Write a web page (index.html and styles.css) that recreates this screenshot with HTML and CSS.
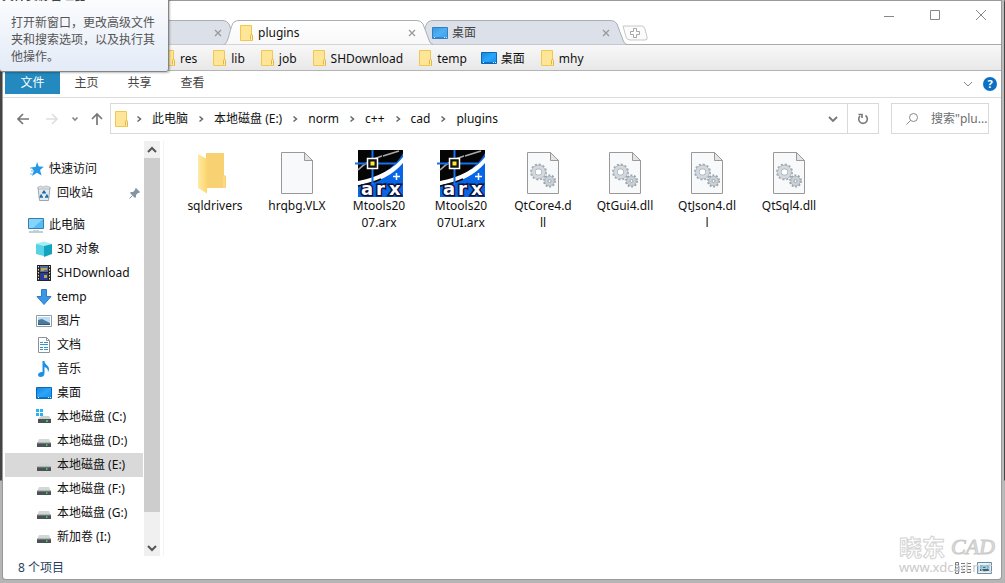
FILE: index.html
```html
<!DOCTYPE html>
<html lang="zh-CN">
<head>
<meta charset="utf-8">
<title>plugins</title>
<link rel="stylesheet" href="styles.css">
</head>
<body>
<svg class="defs" aria-hidden="true">
  <defs>
    <linearGradient id="fold" x2="1" y2="0"><stop offset="0" stop-color="#ffe9a8"/><stop offset="1" stop-color="#fbd76c"/></linearGradient>
    <linearGradient id="sky" x2="1" y2="1"><stop offset="0" stop-color="#1683e0"/><stop offset=".5" stop-color="#2aa5f8"/><stop offset="1" stop-color="#1590ee"/></linearGradient>
    <linearGradient id="tabOn" x2="0" y2="1"><stop offset="0" stop-color="#ffffff"/><stop offset="1" stop-color="#f8f8f8"/></linearGradient>
  </defs>
  <symbol id="folder" viewBox="0 0 16 16"><path d="M2.500.5h11v9l1 1v5h-12z" fill="#ffe597" stroke="#eec84f"/><path d="M12.500 14.500v-4l1-1.500 1 1.500v5" fill="#ffeeb5" stroke="#e3b640"/></symbol>
  <symbol id="desktop" viewBox="0 0 16 16"><path d="M.5 2.500h15v11H.5z" fill="url(#sky)" stroke="#0a68b8"/><path d="M1 12.500h14" stroke="#1271c0"/><path d="M2 12.500h1m9 0h1m1 0h1" stroke="#d8efff"/></symbol>
  <symbol id="drive" viewBox="0 0 16 16"><path d="M3 6h10l2 4H1z" fill="#d3d7d7"/><path d="M1 10h14v4H1z" fill="#4b5352"/><path d="M1 10h14" stroke="#8c9392"/><path d="M10 12h1.500" stroke="#43e26c" stroke-width="1.500"/></symbol>
  <symbol id="chev" viewBox="0 0 8 8"><path d="M2.500 1.500 5.500 4l-3 2.500" fill="none" stroke="#666" stroke-width="1.500"/></symbol>
  <symbol id="close" viewBox="0 0 8 8"><path d="m1 1 6 6m0-6L1 7" stroke="#999" stroke-width="1.300"/></symbol>
  <symbol id="tab" viewBox="0 0 210 25"><path d="M.5 25C6 24 7 5 11 2Q13 .5 16 .5H194Q198 .5 200 4L206 20Q207 24 210 24.500V25z"/></symbol>
  <symbol id="page" viewBox="0 0 48 48"><path d="M8.500 2.500h23l8 8v33h-31z" fill="#f8f9fa" stroke="#999"/><path d="M31.500 2.500v8h8z" fill="#e4e4e4" stroke="#999"/></symbol>
  <symbol id="dll" viewBox="0 0 48 48">
    <use href="#page"/>
    <circle cx="19.500" cy="22" r="7.600" fill="none" stroke="#a4adb5" stroke-width="1.800" stroke-dasharray="2.200 1.780"/>
    <circle cx="19.500" cy="22" r="5" fill="#fff" stroke="#a4adb5" stroke-width="4.400"/><circle cx="19.500" cy="22" r="5" fill="none" stroke="#d3d9de" stroke-width="3.200"/>
    <circle cx="30.500" cy="31" r="5.600" fill="none" stroke="#98a2ab" stroke-width="1.800" stroke-dasharray="1.900 1.618"/>
    <circle cx="30.500" cy="31" r="4.800" fill="#c9d0d6" stroke="#a4adb5" stroke-width=".8"/><circle cx="30.500" cy="31" r="1.500" fill="#f5f6f7" stroke="#929da7" stroke-width=".8"/>
  </symbol>
  <symbol id="arx" viewBox="0 0 48 48">
    <path d="M3 0h45v47H3z" fill="#0865e6"/><path d="M3 0h45v3C40 18 22 29 3 34z" fill="#050505"/>
    <path d="M3 20C12 11 20 8 27 6M28 6 44 1" fill="none" stroke="#aaa" stroke-width="1.700"/>
    <path d="M3 31C22 28 40 18 48 7v6C38 25 24 32 3 36z" fill="#fff"/><path d="M3 36Q17 33 26 29" fill="none" stroke="#080808" stroke-width="1.500"/>
    <path d="M0 13.500h13m9 0h19M17.500 0v9m0 9v16" stroke="#1673ee" stroke-width="2"/>
    <path d="M12.500 8.500h10v10h-10z" fill="#111" stroke="#fff" stroke-width="1.500"/><path d="M15.500 11.500h4v4h-4z" fill="#ffea32"/>
    <path d="M38 26.500h7m-3.500-3.500v7" stroke="#fff" stroke-width="1.500"/>
    <text x="6 21 34" y="45" class="arx-word">arx</text>
  </symbol>
</svg>

<main class="window">
  <header class="titlebar">
    <nav class="tabs" aria-label="标签页">
      <div class="tab"><svg class="tab-shape"><use href="#tab"/></svg><svg class="i16"><use href="#folder"/></svg><span class="tab-name"></span><button class="tab-close" aria-label="关闭"><svg><use href="#close"/></svg></button></div>
      <div class="tab active"><svg class="tab-shape"><use href="#tab"/></svg><svg class="i16"><use href="#folder"/></svg><span class="tab-name">plugins</span><button class="tab-close" aria-label="关闭"><svg><use href="#close"/></svg></button></div>
      <div class="tab"><svg class="tab-shape"><use href="#tab"/></svg><svg class="i16"><use href="#desktop"/></svg><span class="tab-name">桌面</span><button class="tab-close" aria-label="关闭"><svg><use href="#close"/></svg></button></div>
      <button class="tab-new" aria-label="新标签页"><svg viewBox="0 0 26 16"><path d="M1 1h19q2 0 3 3l2 8q1 3-2 3H8q-3 0-4-3z" fill="#fbfbfb" stroke="#c8c8c8"/><path d="M11.500 3.500h3v3h3v3h-3v3h-3v-3h-3v-3h3z" fill="#fff" stroke="#a5a5a5"/></svg></button>
    </nav>
    <div class="controls">
      <button aria-label="最小化"><svg viewBox="0 0 12 12"><path d="M1 7.500h10"/></svg></button>
      <button aria-label="最大化"><svg viewBox="0 0 12 12"><path d="M1.500 1.500h9v9h-9z"/></svg></button>
      <button aria-label="关闭窗口"><svg viewBox="0 0 12 12"><path d="m1 1 10 10m0-10L1 11"/></svg></button>
    </div>
  </header>

  <nav class="bookmarks" aria-label="书签">
    <a href="#"><svg class="i16"><use href="#folder"/></svg>res</a>
    <a href="#"><svg class="i16"><use href="#folder"/></svg>lib</a>
    <a href="#"><svg class="i16"><use href="#folder"/></svg>job</a>
    <a href="#"><svg class="i16"><use href="#folder"/></svg>SHDownload</a>
    <a href="#"><svg class="i16"><use href="#folder"/></svg>temp</a>
    <a href="#"><svg class="i16"><use href="#desktop"/></svg>桌面</a>
    <a href="#"><svg class="i16"><use href="#folder"/></svg>mhy</a>
  </nav>

  <div class="ribbon">
    <button class="file">文件</button><button>主页</button><button>共享</button><button>查看</button>
    <span class="ribbon-end">
      <button aria-label="展开功能区"><svg width="10" height="8" viewBox="0 0 10 8"><path d="m1 2 4 4 4-4" fill="none" stroke="#888"/></svg></button>
      <button class="help" aria-label="帮助">?</button>
    </span>
  </div>

  <div class="address-row">
    <div class="history">
      <button aria-label="后退"><svg viewBox="0 0 14 14"><path d="M13 7H2m5-5L2 7l5 5" stroke="#777"/></svg></button>
      <button aria-label="前进"><svg viewBox="0 0 14 14"><path d="M1 7h11M7 2l5 5-5 5" stroke="#dedede"/></svg></button>
      <button class="recent" aria-label="最近"><svg viewBox="0 0 8 14"><path d="m1.500 5.500 2.500 2.500 2.500-2.500" stroke="#888"/></svg></button>
      <button aria-label="上移"><svg viewBox="0 0 14 14"><path d="M7 13V2M2 7l5-5 5 5" stroke="#777"/></svg></button>
    </div>
    <div class="address">
      <svg class="i16"><use href="#folder"/></svg>
      <svg class="sep"><use href="#chev"/></svg><a href="#">此电脑</a>
      <svg class="sep"><use href="#chev"/></svg><a href="#">本地磁盘 (E:)</a>
      <svg class="sep"><use href="#chev"/></svg><a href="#">norm</a>
      <svg class="sep"><use href="#chev"/></svg><a href="#">c++</a>
      <svg class="sep"><use href="#chev"/></svg><a href="#">cad</a>
      <svg class="sep"><use href="#chev"/></svg><a href="#">plugins</a>
      <button class="drop" aria-label="历史记录"><svg width="10" height="8" viewBox="0 0 10 8"><path d="m1 2 4 4 4-4" fill="none" stroke="#777" stroke-width="1.800"/></svg></button>
      <button class="refresh" aria-label="刷新"><svg width="12" height="12" viewBox="0 0 12 12"><path d="M8.500 2.500A4.300 4.300 0 1 1 3 3M1.500 1.500H5V5" fill="none" stroke="#777" stroke-width="1.600"/></svg></button>
    </div>
    <label class="search">
      <svg width="14" height="14" viewBox="0 0 14 14"><circle cx="8.500" cy="5.500" r="4" fill="none" stroke="#888"/><path d="m5.500 8.500-4 4" stroke="#888"/></svg>
      <input type="text" aria-label="搜索" placeholder="搜索&quot;plu...">
    </label>
  </div>

  <section class="content">
    <nav class="tree" aria-label="导航">
      <a class="root" href="#"><svg class="i16" viewBox="0 0 16 16"><path d="m9 1 1.800 4.500 5 .3-3.800 3.200 1.600 5.500-4.700-2.800L4 15l1.800-5.300L3 6.500l4.700-.8z" fill="#2499e8"/><path d="M2 7h3M3 10h2M2 13h3" stroke="#6dbbf0"/></svg>快速访问</a>
      <a href="#"><svg class="i16" viewBox="0 0 16 16"><path d="M2 2.500h12l-1.500 13h-9z" fill="#e4e9ec" stroke="#9ca5aa"/><path d="m2 2 3-1 2 1 3-1 4 1v2H2z" fill="#d9dddf" stroke="#a9afb2" stroke-width=".7"/><path d="m6.500 8.500 1.500-2 1.500 2M5.500 9.500l-1 2.500h2.500M10.500 9.500l1 2.500H9" fill="none" stroke="#176cae" stroke-width="1.700"/></svg>回收站
        <svg class="pin" viewBox="0 0 12 12"><path d="m7 1 4 4-1 1H9L7 8v2L6 11 1 6l1-1h2l2-2V2z" fill="#8494a2"/><path d="M3.500 8.500.5 11.500" stroke="#8494a2"/></svg></a>
      <a class="root group" href="#"><svg class="i16" viewBox="0 0 16 16"><path d="M.5 1.500h15v10H.5z" fill="#55bdf6" stroke="#347faf"/><path d="M1 2h14L5 11H1z" fill="#87d4fb"/><path d="M1 15h14" stroke="#819daf"/><path d="M5 13.500h6" stroke="#c7d4dc"/></svg>此电脑</a>
      <a href="#"><svg class="i16" viewBox="0 0 16 16"><path d="m0 3 8-2v14l-8-2z" fill="#56d3e4"/><path d="m0 3 8-2.500L16 3l-8 2z" fill="#a3edf3"/><path d="m8 5 8-2v10l-8 3z" fill="#14a3bf"/></svg>3D 对象</a>
      <a href="#"><svg class="i16" viewBox="0 0 16 16"><path d="M1 0h14v16H1z" fill="#242424"/><path d="M4 1h8v6H4z" fill="#536c9d"/><path d="M4 8h8v7H4z" fill="#263da0"/><path d="M5 3h3v3H5zM8 10h3v3H8zM8 3h3v2H8z" fill="#c9a541"/><path d="M2.500 1v15M13.500 1v15" stroke="#ddd" stroke-dasharray="1.500 1.500"/></svg>SHDownload</a>
      <a href="#"><svg class="i16" viewBox="0 0 16 16"><path d="M5.500.5h5v7h4.500L8 15.500 1 7.500h4.500z" fill="#3c96e8" stroke="#2b7dca"/></svg>temp</a>
      <a href="#"><svg class="i16" viewBox="0 0 16 16"><path d="M.5 2.500h15v11H.5z" fill="#fff" stroke="#909ba3"/><path d="M2 4h12v8H2z" fill="#b9ddf3"/><path d="m2 7 4-1 8 4v2H2z" fill="#487b9e"/><path d="M2 11h12v1H2z" fill="#315e79"/></svg>图片</a>
      <a href="#"><svg class="i16" viewBox="0 0 16 16"><path d="M2.500.5h8l3 3v12h-11z" fill="#fff" stroke="#8d9499"/><path d="M10.500.5v3h3" fill="none" stroke="#8d9499"/><path d="M4 5.500h3m1 0h4M4 7.500h8M4 10.500h3m1 0h4M4 12.500h3m1 0h4" stroke="#3694c7"/></svg>文档</a>
      <a href="#"><svg class="i16" viewBox="0 0 16 16"><path d="M6.500 0h2c0 4 5 4 4.500 9l-1 2c0-3-1-4-3.500-5v6c0 3-2 4-4 4S2 14.500 2 13.500s2-3 4.500-2.500z" fill="#1b91e5"/></svg>音乐</a>
      <a href="#"><svg class="i16"><use href="#desktop"/></svg>桌面</a>
      <a href="#"><svg class="i16" viewBox="0 0 16 16"><path d="M0 0h3v3H0zM4 0h3v3H4zM0 4h3v3H0zM4 4h3v3H4z" fill="#27b4ee"/><path d="M5 7h8l2 3H2z" fill="#cbd0d0"/><path d="M2 10h13v4H2z" fill="#4b5352"/><path d="M10 12h2" stroke="#43e26c" stroke-width="1.500"/></svg>本地磁盘 (C:)</a>
      <a href="#"><svg class="i16"><use href="#drive"/></svg>本地磁盘 (D:)</a>
      <a class="selected" href="#"><svg class="i16"><use href="#drive"/></svg>本地磁盘 (E:)</a>
      <a href="#"><svg class="i16"><use href="#drive"/></svg>本地磁盘 (F:)</a>
      <a href="#"><svg class="i16"><use href="#drive"/></svg>本地磁盘 (G:)</a>
      <a href="#"><svg class="i16"><use href="#drive"/></svg>新加卷 (I:)</a>
    </nav>
    <div class="scrollbar">
      <button aria-label="向上滚动"><svg viewBox="0 0 10 8"><path d="m1 6 4-4 4 4"/></svg></button>
      <div class="track"><div class="thumb"></div></div>
      <button aria-label="向下滚动"><svg viewBox="0 0 10 8"><path d="m1 2 4 4 4-4"/></svg></button>
    </div>
    <ul class="files">
      <li><svg viewBox="0 0 48 48"><path d="M15 3h18v22l2 1v12H15z" fill="#f8d172"/><path d="m7 4 9 5v34.500L7 38z" fill="url(#fold)"/><path d="M33 25v13" stroke="#fbe09a"/></svg>sqldrivers</li>
      <li><svg><use href="#page"/></svg>hrqbg.VLX</li>
      <li><svg><use href="#arx"/></svg>Mtools20<br>07.arx</li>
      <li><svg><use href="#arx"/></svg>Mtools20<br>07UI.arx</li>
      <li><svg><use href="#dll"/></svg>QtCore4.d<br>ll</li>
      <li><svg><use href="#dll"/></svg>QtGui4.dll</li>
      <li><svg><use href="#dll"/></svg>QtJson4.dl<br>l</li>
      <li><svg><use href="#dll"/></svg>QtSql4.dll</li>
    </ul>
  </section>

  <footer class="status">
    <span>8 个项目</span>
    <div class="views">
      <button aria-label="详细信息"><svg viewBox="0 0 16 12"><path d="M.5.5h3v11h-3zM2 2v1m0 2v1m0 2v1M6 1.500h4M6 4.500h4M6 7.500h4M6 10.500h4M12 1.500h4M12 4.500h4M12 7.500h4M12 10.500h4" fill="none" stroke="#777"/></svg></button>
      <button aria-label="大图标"><svg viewBox="0 0 16 12"><path d="M.5.500h14v11H.5z" fill="#e3f2fb" stroke="#718b9d"/><path d="M3 3h9v3H3z" fill="#69b9e7"/><path d="m3 7 4-2 5 2v2H3z" fill="#33657e"/></svg></button>
    </div>
  </footer>
</main>

<aside class="tooltip" role="tooltip"><strong>文件资源管理器</strong><p>打开新窗口，更改高级文件夹和搜索选项，以及执行其他操作。</p></aside>
<div class="watermark"><div class="mark-name"><b>晓东</b><i>CAD</i></div><div class="mark-url">www.xdcad.net</div></div>
</body>
</html>
```
FILE: styles.css
```css
* { box-sizing: border-box; }

body {
  margin: 0;
  min-height: 100vh;
  display: flex;
  flex-direction: column;
  position: relative;
  padding: 1px 4px 4px 3px;
  background: linear-gradient(#7b7b7b, #7b7b7b 1px, #444 2px, #444 480px, #b5b5b5 481px);
  color: #111;
  font: 12px/17px "Noto Sans", "Noto Sans CJK SC", sans-serif;
}

.defs { position: absolute; width: 0; height: 0; }
button { border: 0; padding: 0; background: none; font: inherit; color: inherit; }
a { color: inherit; text-decoration: none; white-space: nowrap; }
svg { display: block; flex: none; }
.i16 { width: 16px; height: 16px; }

.window {
  flex: 1;
  display: flex;
  flex-direction: column;
  background: #fff;
  border-radius: 0 0 3px 3px;
  box-shadow: 0 0 0 1px #999, 2px 0 0 1px #bbb;
}

/* Title bar and tabs */
.titlebar {
  display: flex;
  justify-content: space-between;
  height: 44px;
  border-bottom: 1px solid #aaa;
}
.tabs { display: flex; align-items: flex-end; padding-left: 26px; }
.tab {
  position: relative;
  display: flex;
  align-items: center;
  gap: 4px;
  width: 210px;
  height: 25px;
  margin: 0 -16px -1px 0;
  padding: 0 17px 0 15px;
  color: #444;
}
.tab-shape {
  position: absolute;
  inset: 0;
  width: 210px;
  height: 25px;
  fill: #dce0e8;
  stroke: #aaafb6;
}
.tab > .i16, .tab-name, .tab-close { position: relative; }
.tab > .i16 { opacity: .8; }
.tab-name { flex: 1; }
.tab.active { z-index: 1; color: #111; }
.tab.active .tab-shape { fill: url(#tabOn); }
.tab.active > .i16 { opacity: 1; }
.tab-close svg { width: 8px; height: 8px; }
.tab-new { margin: 0 0 3px 11px; }
.tab-new svg { width: 26px; height: 16px; }
.controls { display: flex; align-items: flex-start; gap: 34px; padding: 8px 14px 0 0; }
.controls svg { width: 12px; height: 12px; fill: none; stroke: #888; }

.bookmarks {
  display: flex;
  align-items: center;
  gap: 14px;
  height: 26px;
  padding: 1px 0 0 157px;
  background: linear-gradient(#f8f8f8, #e8e8e8);
  border-bottom: 1px solid #b5b5b5;
}
.bookmarks a { display: flex; align-items: center; gap: 4px; }

/* Ribbon */
.ribbon {
  display: flex;
  height: 27px;
  padding-left: 2px;
  border-bottom: 1px solid #dcdcdc;
}
.ribbon > button { width: 53px; height: 23px; color: #444; }
.ribbon > .file { width: 55px; background: #2389be; color: #fff; }
.ribbon-end { display: flex; align-items: center; gap: 10px; margin-left: auto; padding-right: 4px; }
.ribbon-end .help {
  width: 14px;
  height: 14px;
  border-radius: 50%;
  background: #0b6fc6;
  color: #fff;
  font-size: 11px;
  font-weight: bold;
  line-height: 14px;
}

/* Address bar */
.address-row { display: flex; height: 31px; margin: 5px 12px 7px 0; }
.history { display: flex; align-items: center; gap: 15px; width: 107px; padding-left: 13px; }
.history svg { width: 14px; height: 14px; fill: none; stroke-width: 1.7; }
.history .recent { margin: 0 -4px 0 -3px; }
.history .recent svg { width: 8px; }
.address {
  flex: 1;
  display: flex;
  align-items: center;
  border: 1px solid #d9d9d9;
  padding-left: 2px;
}
.sep { width: 8px; height: 8px; margin: 0 9px; }
.address .i16 + .sep { margin-left: 6px; }
.address .drop { margin-left: auto; padding: 0 9px; }
.address .refresh { align-self: stretch; width: 31px; padding-left: 9px; border-left: 1px solid #d9d9d9; }
.search {
  display: flex;
  align-items: center;
  gap: 12px;
  width: 98px;
  margin-left: 12px;
  padding-left: 13px;
  border: 1px solid #d9d9d9;
}
.search input { flex: 1; min-width: 0; border: 0; padding: 0; outline: 0; background: none; font: inherit; }
.search input::placeholder { color: #6d6d6d; }

/* Navigation tree and files */
.content { flex: 1; display: flex; }
.tree { width: 140px; padding: 16px 0 7px 2px; }
.tree a { display: flex; align-items: center; gap: 5px; height: 24px; padding: 0 0 1px 31px; }
.tree .root { padding-left: 23px; }
.tree .group { margin-top: 8px; }
.tree .selected { background: #d9d9d9; }
.pin { width: 12px; height: 12px; margin: 0 2px 0 auto; }
.scrollbar { display: flex; flex-direction: column; width: 16px; margin-left: 1px; background: #f0f0f0; }
.scrollbar button { height: 17px; padding-left: 3px; }
.scrollbar svg { width: 10px; height: 8px; fill: none; stroke: #555; stroke-width: 2; }
.track { flex: 1; }
.thumb { height: 93%; background: #cdcdcd; }
.files {
  flex: 1;
  display: grid;
  grid-template-columns: repeat(auto-fill, 82px);
  align-content: start;
  margin: 0 0 0 3px;
  padding: 9px 0 0 10px;
  list-style: none;
  border-left: 1px solid #f4f4f4;
}
.files li { display: flow-root; text-align: center; }
.files svg { width: 48px; height: 48px; margin: 0 auto -1px; }
.arx-word {
  font: bold 18px "DejaVu Sans", sans-serif;
  fill: #fff;
  stroke: #10103a;
  stroke-width: 3px;
  paint-order: stroke;
}

.status {
  display: flex;
  align-items: center;
  justify-content: space-between;
  height: 23px;
  padding: 0 8px 0 15px;
  color: #26425f;
}
.views { display: flex; gap: 6px; }
.views svg { width: 16px; height: 12px; }

/* Floating layers */
.tooltip {
  position: absolute;
  z-index: 3;
  left: -1px;
  top: -14px;
  width: 170px;
  padding: 0 11px 6px;
  border: 1px solid #858585;
  border-radius: 0 0 3px 3px;
  background: linear-gradient(#fff, #e3ebf7);
  box-shadow: 1px 1px 2px #0004;
  color: #555;
}
.tooltip strong { display: block; margin-left: -9px; color: #444; }
.tooltip p { margin: 10px 0 0; }
.watermark {
  position: absolute;
  right: 10px;
  bottom: 7px;
  width: 96px;
  color: #c9c9c9;
  pointer-events: none;
}
.mark-name { display: flex; justify-content: space-between; align-items: center; height: 24px; }
.mark-name b { font-size: 23px; color: #fff; -webkit-text-stroke: 1px #d4d4d4; }
.mark-name i { font: italic 22px "Liberation Serif", serif; color: #ddd; -webkit-text-stroke: 1px #ccc; }
.mark-url { font-size: 13px; line-height: 17px; }
```
